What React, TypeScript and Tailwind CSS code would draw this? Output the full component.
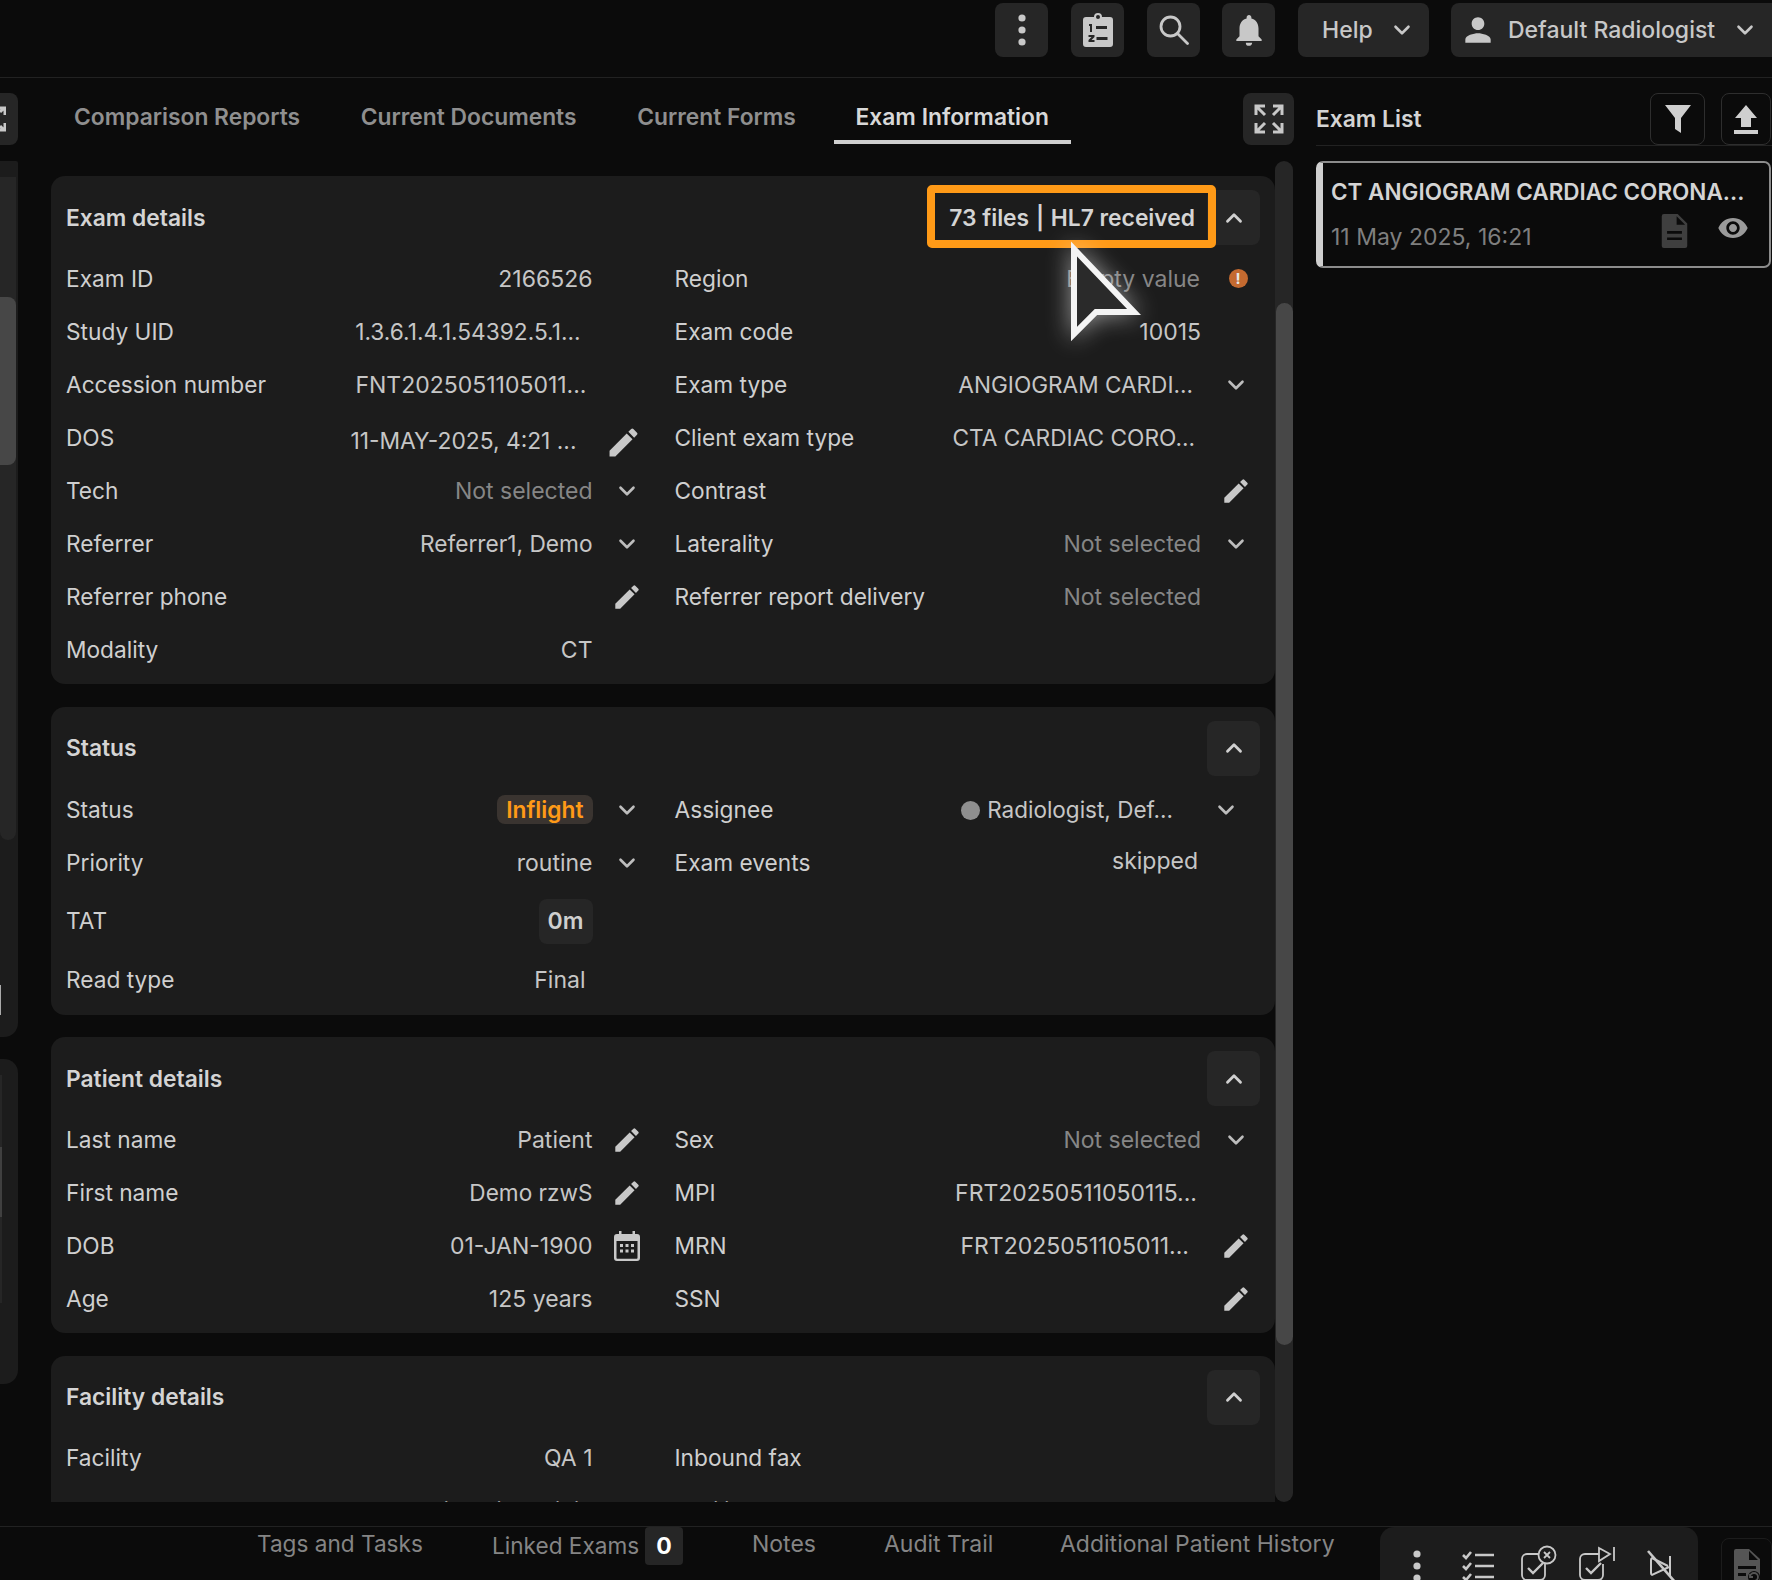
import React from "react";
import { ChevronDown, ChevronUp } from "lucide-react";
import { MdNotifications, MdPerson, MdVisibility } from "react-icons/md";

const Pencil = ({ cls = "w-[28px] h-[28px]" }: { cls?: string }) => (
  <svg viewBox="2 2 20 20" className={cls + " text-[#c8c8c8]"} fill="currentColor">
    <path d="M3 17.25V21h3.75L17.81 9.94l-3.75-3.75L3 17.25zM20.71 7.04a1 1 0 0 0 0-1.41l-2.34-2.34a1 1 0 0 0-1.41 0l-1.83 1.83 3.75 3.75 1.83-1.83z" />
  </svg>
);
const Chev = () => <ChevronDown className="w-[26px] h-[26px] text-[#bdbdbd]" strokeWidth={2.4} />;
const Calendar = () => (
  <svg viewBox="0 0 26 30" className="w-[26px] h-[30px] text-[#c8c8c8]" fill="currentColor">
    <path fillRule="evenodd" d="M5 0h2.5v3h11V0H21v3h2a3 3 0 0 1 3 3v21a3 3 0 0 1-3 3H3a3 3 0 0 1-3-3V6a3 3 0 0 1 3-3h2V0zM2.5 10v17c0 .4.3.7.7.7h19.6c.4 0 .7-.3.7-.7V10H2.5z" />
    <path d="M6 13h3v3H6zM11.5 13h3v3h-3zM17 13h3v3h-3zM6 18.5h3v3H6zM11.5 18.5h3v3h-3zM17 18.5h3v3h-3z" />
  </svg>
);
const Warn = () => (
  <span className="flex w-[19px] h-[19px] items-center justify-center rounded-full bg-[#c46a30] text-[15px] font-bold leading-none text-[#e8e8e8]">!</span>
);

type R = { l?: string; v?: React.ReactNode; vc?: string; fs?: string; i?: React.ReactNode; muted?: boolean };
const Row = ({ r, h = "h-[53px]" }: { r: R; h?: string }) => (
  <div className={"flex items-center " + h}>
    {r.l && <span className="whitespace-nowrap text-[22.7px] text-[#cfcfcf]">{r.l}</span>}
    <span className={"ml-auto whitespace-nowrap text-right " + (r.fs ?? "text-[23px]") + (r.muted ? " text-[#868686] " : " text-[#c6c6c6] ") + (r.vc ?? "")}>{r.v}</span>
    <span className="flex w-[69px] shrink-0 items-center justify-center">{r.i}</span>
  </div>
);

const Collapse = () => (
  <button className="flex h-[55px] w-[53px] items-center justify-center rounded-[8px] bg-[#262626] text-[#d0d0d0]">
    <ChevronUp className="w-[26px] h-[26px]" strokeWidth={2.6} />
  </button>
);

const Card = ({ title, extra, cls, children }: { title: string; extra?: React.ReactNode; cls?: string; children: React.ReactNode }) => (
  <section className={"shrink-0 rounded-[14px] bg-[#1c1c1c] pl-[15px] pr-[5px] " + (cls ?? "")}>
    <div className="flex pb-[7px] pr-[10px] pt-[14px]">
      <div className="flex h-[55px] w-full items-center">
        <h2 className="text-[22.8px] font-semibold text-[#d4d4d4]">{title}</h2>
        <span className="ml-auto mr-[12px] text-[22.8px] font-semibold text-[#d4d4d4]">{extra}</span>
        <Collapse />
      </div>
    </div>
    <div className="grid grid-cols-2 gap-x-[13px]">{children}</div>
  </section>
);

const TopBtn = ({ children }: { children: React.ReactNode }) => (
  <button className="flex h-[54px] w-[53px] items-center justify-center rounded-[8px] bg-[#262626] text-[#c8c8c8]">{children}</button>
);

const Kebab = ({ cls = "" }: { cls?: string }) => (
  <svg viewBox="0 0 12 36" className={"w-[12px] h-[36px] " + cls} fill="currentColor">
    <circle cx="6" cy="6" r="3.6" /><circle cx="6" cy="18" r="3.6" /><circle cx="6" cy="30" r="3.6" />
  </svg>
);

const examLeft: R[] = [
  { l: "Exam ID", v: "2166526" },
  { l: "Study UID", v: "1.3.6.1.4.1.54392.5.1...", vc: "pr-[12px]", fs: "text-[22.7px]" },
  { l: "Accession number", v: "FNT2025051105011...", vc: "pr-[6px]" },
  { l: "DOS", v: "11-MAY-2025, 4:21 ...", fs: "text-[22.8px]", vc: "pr-[16px] pt-[7px]", i: <span className="-ml-[7px] mt-[9px]"><Pencil cls="w-[31px] h-[31px]" /></span> },
  { l: "Tech", v: "Not selected", muted: true, i: <Chev /> },
  { l: "Referrer", v: "Referrer1, Demo", fs: "text-[22.7px]", i: <Chev /> },
  { l: "Referrer phone", i: <Pencil cls="w-[26px] h-[26px]" /> },
  { l: "Modality", v: "CT" },
];
const examRight: R[] = [
  { l: "Region", v: "Empty value", muted: true, vc: "pr-[1px]", i: <span className="ml-[5px]"><Warn /></span> },
  { l: "Exam code", v: "10015" },
  { l: "Exam type", v: "ANGIOGRAM CARDI...", fs: "text-[22.6px]", vc: "pr-[8px]", i: <Chev /> },
  { l: "Client exam type", v: "CTA CARDIAC CORO...", fs: "text-[22.7px]", vc: "pr-[6px]" },
  { l: "Contrast", i: <Pencil cls="w-[26px] h-[26px]" /> },
  { l: "Laterality", v: "Not selected", muted: true, i: <Chev /> },
  { l: "Referrer report delivery", v: "Not selected", muted: true },
  {},
];
const patientLeft: R[] = [
  { l: "Last name", v: "Patient", i: <Pencil cls="w-[26px] h-[26px]" /> },
  { l: "First name", v: "Demo rzwS", fs: "text-[22.6px]", i: <Pencil cls="w-[26px] h-[26px]" /> },
  { l: "DOB", v: "01-JAN-1900", i: <Calendar /> },
  { l: "Age", v: "125 years" },
];
const patientRight: R[] = [
  { l: "Sex", v: "Not selected", muted: true, i: <Chev /> },
  { l: "MPI", v: "FRT20250511050115...", vc: "pr-[4px]" },
  { l: "MRN", v: "FRT2025051105011...", vc: "pr-[12px]", i: <Pencil cls="w-[26px] h-[26px]" /> },
  { l: "SSN", i: <Pencil cls="w-[26px] h-[26px]" /> },
];

const pairs = (a: R[], b: R[]) =>
  a.map((r, i) => (
    <React.Fragment key={i}>
      <Row r={r} />
      <Row r={b[i]} />
    </React.Fragment>
  ));

export default function App() {
  return (
    <div
      className="relative flex h-[1580px] w-[1772px] flex-col overflow-hidden bg-[#0b0b0b] text-[22.5px] leading-[30px] text-[#cfcfcf]"
      style={{ fontFamily: "Inter, 'Liberation Sans', sans-serif" }}
    >
      {/* Top bar */}
      <header className="flex h-[78px] shrink-0 justify-end border-b border-[#222222] pt-[3px]">
        <div className="flex h-[54px] items-center">
          <TopBtn><Kebab /></TopBtn>
          <span className="ml-[23px]">
            <TopBtn>
              <svg viewBox="0 0 30 34" className="w-[30px] h-[34px]" fill="currentColor">
                <path fillRule="evenodd" d="M3 4h8a4 4 0 0 1 8 0h8a3 3 0 0 1 3 3v24a3 3 0 0 1-3 3H3a3 3 0 0 1-3-3V7a3 3 0 0 1 3-3zm12-2a2 2 0 1 0 0 4 2 2 0 0 0 0-4zM6 11h3v8H7v-6H6v-2zm7 2h11v3H13v-3zM5.500 22h6v2l-3 3h3v2h-6v-2l3-3h-3v-2zm8 2h11v3h-11v-3z" />
              </svg>
            </TopBtn>
          </span>
          <span className="ml-[23px]">
            <TopBtn>
              <svg viewBox="0 0 30 30" className="w-[30px] h-[30px]" fill="none" stroke="currentColor" strokeWidth="2.800" strokeLinecap="round">
                <circle cx="11.500" cy="11.500" r="9.500" /><path d="M18.500 18.500L28.500 28.500" />
              </svg>
            </TopBtn>
          </span>
          <span className="ml-[22px]"><TopBtn><MdNotifications className="w-[38px] h-[38px]" /></TopBtn></span>
          <button className="ml-[23px] flex h-[54px] w-[131px] items-center rounded-[8px] bg-[#262626] pl-[24px] text-[23px] font-medium text-[#c8c8c8]">
            Help
            <ChevronDown className="ml-[16px] w-[26px] h-[26px]" strokeWidth={2.4} />
          </button>
          <button className="ml-[22px] flex h-[54px] w-[321px] items-center rounded-l-[8px] bg-[#262626] pl-[8px] text-[23px] font-medium text-[#c8c8c8]">
            <MdPerson className="w-[38px] h-[38px] shrink-0" />
            <span className="ml-[11px] whitespace-nowrap">Default Radiologist</span>
            <ChevronDown className="ml-[17px] w-[26px] h-[26px] shrink-0" strokeWidth={2.4} />
          </button>
        </div>
      </header>

      {/* Middle */}
      <div className="flex min-h-0 flex-1 pt-[15px]">
        {/* Left strip */}
        <aside className="flex w-[18px] shrink-0 flex-col">
          <button className="flex h-[52px] w-full items-center justify-start rounded-r-[8px] bg-[#262626] text-[#c8c8c8]">
            <svg viewBox="0 0 6 28" className="w-[6px] h-[28px]" fill="none" stroke="currentColor" strokeWidth="3"><path d="M0 3h5v7M0 25h5v-7M0 7l3-3M0 21l3 3" /></svg>
          </button>
          <div className="mt-[16px] flex h-[876px] flex-col rounded-br-[14px] rounded-tr-[2px] bg-[#1c1c1c] pt-[16px]">
            <div className="h-[663px] w-[16px] rounded-b-[10px] bg-[#262626] pt-[120px]">
              <div className="h-[168px] w-full rounded-r-[8px] bg-[#474747]" />
            </div>
            <div className="mt-[145px] h-[30px] w-[1px] bg-[#aaaaaa]" />
          </div>
          <div className="mt-[22px] h-[325px] rounded-r-[14px] bg-[#1c1c1c] pt-[16px]">
            <div className="h-[228px] w-[2px] bg-[#262626] pt-[72px]">
              <div className="h-[70px] w-full bg-[#404040]" />
            </div>
          </div>
        </aside>

        {/* Main */}
        <main className="ml-[33px] flex w-[1243px] shrink-0 flex-col">
          <nav className="flex h-[52px] shrink-0 text-[22.8px]">
            {["Comparison Reports", "Current Documents", "Current Forms"].map((t) => (
              <a key={t} className="mr-[14.7px] flex h-[51px] items-center px-[23px] pb-[3px] font-semibold text-[#8f8f8f]">{t}</a>
            ))}
            <a className="flex h-[51px] items-center border-b-[4px] border-[#cfcfcf] px-[22px] font-semibold text-[#d8d8d8]">Exam Information</a>
            <button className="ml-auto flex h-[52px] w-[51px] items-center justify-center rounded-[8px] bg-[#262626] text-[#c8c8c8]">
              <svg viewBox="0 0 30 30" className="w-[30px] h-[30px]" fill="none" stroke="currentColor" strokeWidth="3">
                <path d="M2 11V2h9M28 11V2h-9M2 19v9h9M28 19v9h-9M2 2l9 9M28 2l-9 9M2 28l9-9M28 28l-9-9" />
              </svg>
            </button>
          </nav>

          <div className="mt-[16px] flex h-[1341px] shrink-0">
            <div className="flex h-full w-[1224px] shrink-0 flex-col gap-[22.500px] overflow-hidden pt-[15px]">
              <Card title="Exam details" extra={<>73 files <span className="px-[1px]">|</span> HL7 received</>} cls="h-[508px]">
                {pairs(examLeft, examRight)}
              </Card>
              <Card title="Status" cls="h-[308px]">
                <Row h="h-[53px] pt-[2px]" r={{ l: "Status", v: <span className="rounded-[8px] bg-[#3a3430] px-[9px] py-[1px] text-[22.8px] font-semibold text-[#ff9a17]">Inflight</span>, i: <Chev /> }} />
                <div className="flex h-[53px] items-center pt-[2px]">
                  <span className="text-[22.7px]">Assignee</span>
                  <span className="ml-auto flex items-center whitespace-nowrap text-[22.5px] text-[#c6c6c6]">
                    <span className="mr-[7px] h-[19px] w-[19px] rounded-full bg-[#8f8f8f]" />
                    Radiologist, Def...
                  </span>
                  <span className="ml-[40px] mr-[31px]"><Chev /></span>
                </div>
                <Row h="h-[53px] pt-[2px]" r={{ l: "Priority", v: "routine", i: <Chev /> }} />
                <Row h="h-[53px] pt-[2px]" r={{ l: "Exam events", v: "skipped", vc: "pr-[3px] pb-[4px]" }} />
                <Row h="h-[65px]" r={{ l: "TAT", v: <span className="inline-flex h-[45px] w-[54px] items-center justify-center rounded-[8px] bg-[#262626] font-semibold text-[#cfcfcf]">0m</span> }} />
                <div />
                <Row r={{ l: "Read type", v: "Final", vc: "pr-[7px]" }} />
                <div />
              </Card>
              <Card title="Patient details" cls="h-[296px]">
                {pairs(patientLeft, patientRight)}
              </Card>
              <Card title="Facility details" cls="h-[296px]">
                <Row r={{ l: "Facility", v: "QA 1" }} />
                <Row r={{ l: "Inbound fax" }} />
                <Row r={{ l: "Type", v: "local imaging clinic" }} />
                <Row r={{ l: "Facility code" }} />
              </Card>
            </div>
            <div className="h-full w-[18px] shrink-0 rounded-[9px] bg-[#262626] pl-[1px] pt-[142px]">
              <div className="h-[1042px] w-full rounded-[9px] bg-[#474747]" />
            </div>
          </div>
        </main>

        {/* Exam list */}
        <aside className="ml-[22px] flex w-[456px] shrink-0 flex-col">
          <div className="flex h-[53px] shrink-0 items-start border-b border-[#222222]">
            <h2 className="mt-[11px] text-[22.8px] font-semibold text-[#d4d4d4]">Exam List</h2>
            <button className="ml-auto flex h-[52px] w-[55px] items-center justify-center rounded-[8px] border border-[#2e2e2e] text-[#cfcfcf]">
              <svg viewBox="0 0 28 30" className="w-[28px] h-[30px]" fill="currentColor"><path d="M1 1h26L17 14v15l-6-4V14z" /></svg>
            </button>
            <button className="ml-[16px] mr-[1px] flex h-[52px] w-[50px] items-center justify-center rounded-[8px] border border-[#2e2e2e] text-[#cfcfcf]">
              <svg viewBox="0 0 26 30" className="w-[26px] h-[30px]" fill="currentColor"><path d="M13 1l11 13h-6v9H8v-9H2zM1 26h24v4H1z" /></svg>
            </button>
          </div>
          <div className="mr-[1px] mt-[15px] h-[107px] rounded-[7px] border-2 border-l-[7px] border-[#8c8c8c] border-l-[#cfcfcf] pl-[8px]">
            <div className="whitespace-nowrap pt-[14px] font-semibold text-[#d4d4d4]">CT ANGIOGRAM CARDIAC CORONA...</div>
            <div className="flex items-start pt-[15px]">
              <span className="whitespace-nowrap text-[23px] text-[#7f7f7f]">11 May 2025, 16:21</span>
              <svg viewBox="0 0 24 32" className="ml-[129px] -mt-[8px] w-[27px] h-[34px] shrink-0 text-[#3f3f3f]" fill="currentColor">
                <path d="M2 0h13l9 9v21a2 2 0 0 1-2 2H2a2 2 0 0 1-2-2V2a2 2 0 0 1 2-2zm12 2v8h8zM5 16v2.500h14V16zm0 6v2.500h14V22z" fillRule="evenodd" />
              </svg>
              <MdVisibility className="ml-[29px] -mt-[10px] w-[32px] h-[32px] shrink-0 text-[#9a9a9a]" />
            </div>
          </div>
        </aside>
      </div>

      {/* Bottom bar */}
      <footer className="flex h-[54px] shrink-0 border-t border-[#222222] pl-[257px] text-[23px] text-[#858585]">
        <span className="mt-[2px] h-[30px] w-[235px] whitespace-nowrap text-[22.6px]">Tags and Tasks</span>
        <span className="mt-[4px] h-[30px] w-[153px] whitespace-nowrap text-[22.6px]">Linked Exams</span>
        <span className="flex h-[38px] w-[38px] items-center justify-center rounded-[4px] bg-[#262626] font-bold text-white">0</span>
        <span className="ml-[69px] mt-[2px] h-[30px] w-[132px] whitespace-nowrap">Notes</span>
        <span className="mt-[2px] h-[30px] w-[176px] whitespace-nowrap">Audit Trail</span>
        <span className="mt-[2px] h-[30px] w-[320px] whitespace-nowrap">Additional Patient History</span>
        <div className="flex h-[60px] w-[318px] shrink-0 rounded-t-[14px] bg-[#1c1c1c] text-[#c8c8c8]">
          <Kebab cls="ml-[31px] mt-[21px] shrink-0" />
          <svg viewBox="0 0 32 32" className="ml-[39px] mt-[24px] w-[32px] h-[32px] shrink-0" fill="none" stroke="currentColor" strokeWidth="2.600">
            <path d="M1 4l3 3 5-6M1 15l3 3 5-6M1 26l3 3 5-6" /><path d="M13 4h19M13 15h19M13 26h19" />
          </svg>
          <svg viewBox="0 0 36 36" className="ml-[27px] mt-[18px] w-[36px] h-[36px] shrink-0" fill="none" stroke="currentColor" strokeWidth="1.800">
            <path d="M17 9H6a5 5 0 0 0-5 5v16a5 5 0 0 0 5 5h13a5 5 0 0 0 5-5V19" /><path d="M7 23l5 5 10-10" strokeWidth="2.400" /><circle cx="26" cy="10" r="8.500" /><path d="M23 7l6 6M29 7l-6 6" />
          </svg>
          <svg viewBox="0 0 36 36" className="ml-[22px] mt-[18px] w-[36px] h-[36px] shrink-0" fill="none" stroke="currentColor" strokeWidth="1.800">
            <path d="M20 9H6a5 5 0 0 0-5 5v16a5 5 0 0 0 5 5h13a5 5 0 0 0 5-5V19" /><path d="M7 23l5 5 10-10" strokeWidth="2.400" /><path d="M20 3l11 6-11 7zM35 2v14" />
          </svg>
          <svg viewBox="0 0 28 32" className="ml-[32px] mt-[23px] w-[28px] h-[32px] shrink-0" fill="none" stroke="currentColor" strokeWidth="2">
            <path d="M1 1l27 31" strokeWidth="2.600" /><path d="M23 6v20M21 16L5 8a2 2 0 0 0-1 2v13a2 2 0 0 0 1 2l17-8" />
          </svg>
        </div>
        <div className="ml-[23px] mt-[11px] flex h-[50px] w-[51px] shrink-0 justify-center rounded-t-[8px] border border-[#1c1c1c] pt-[10px] text-[#555555]">
          <svg viewBox="0 0 26 34" className="w-[26px] h-[34px]" fill="currentColor">
            <path fillRule="evenodd" d="M2 0h13l11 10v22a2 2 0 0 1-2 2H2a2 2 0 0 1-2-2V2a2 2 0 0 1 2-2zm13 2v9h9zM4 17v3h18v-3zm0 7v3h8v-3z" />
            <circle cx="20" cy="28" r="6" fill="#0b0b0b" />
            <path d="M16 28a4 4 0 1 1 4 4M16 25v3h3" fill="none" stroke="currentColor" strokeWidth="1.800" />
          </svg>
        </div>
      </footer>

      {/* Overlay annotation: orange highlight */}
      <div className="pointer-events-none absolute left-[927px] top-[185px] h-[63px] w-[289px] rounded-[5px] border-[8px] border-[#ff9a17]" />
      {/* Overlay annotation: cursor */}
      <svg viewBox="0 0 100 130" className="pointer-events-none absolute left-[1052px] top-[225px] h-[130px] w-[100px] overflow-visible drop-shadow-[0_0_12px_rgba(255,255,255,0.55)]">
        <path d="M22 24V109L44 87H82Z" fill="#2a2a2a" stroke="#f4f4f4" strokeWidth="6" />
      </svg>
    </div>
  );
}
